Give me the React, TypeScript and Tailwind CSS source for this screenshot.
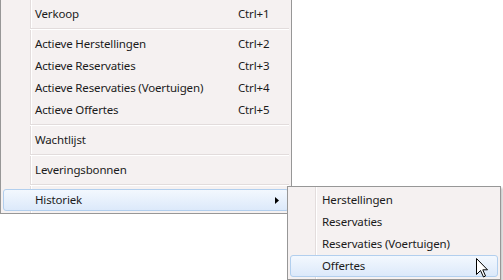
import React from 'react';

type Entry =
  | { kind: 'item'; label: string; shortcut?: string; active?: boolean; submenu?: boolean }
  | { kind: 'sep' };

const mainItems: Entry[] = [
  { kind: 'item', label: 'Verkoop', shortcut: 'Ctrl+1' },
  { kind: 'sep' },
  { kind: 'item', label: 'Actieve Herstellingen', shortcut: 'Ctrl+2' },
  { kind: 'item', label: 'Actieve Reservaties', shortcut: 'Ctrl+3' },
  { kind: 'item', label: 'Actieve Reservaties (Voertuigen)', shortcut: 'Ctrl+4' },
  { kind: 'item', label: 'Actieve Offertes', shortcut: 'Ctrl+5' },
  { kind: 'sep' },
  { kind: 'item', label: 'Wachtlijst' },
  { kind: 'sep' },
  { kind: 'item', label: 'Leveringsbonnen' },
  { kind: 'sep' },
  { kind: 'item', label: 'Historiek', active: true, submenu: true },
];

const subItems = ['Herstellingen', 'Reservaties', 'Reservaties (Voertuigen)', 'Offertes'];

function Row({ label, shortcut, active, submenu }: { label: string; shortcut?: string; active?: boolean; submenu?: boolean }) {
  return (
    <div
      className={
        'flex items-center h-[22px] ' +
        (active
          ? 'rounded-[3px] border border-[#b2cfee] bg-gradient-to-b from-[#f3f8fe] to-[#dce9fa] pl-[31px]'
          : 'pl-[32px]')
      }
    >
      <span className="flex-1">{label}</span>
      {shortcut && <span className="w-[51px]">{shortcut}</span>}
      {submenu && (
        <svg width="4" height="7" viewBox="0 0 4 7" className="mr-[9px]">
          <path d="M0 0 L4 3.5 L0 7 Z" fill="#000" />
        </svg>
      )}
    </div>
  );
}

function Separator() {
  return (
    <div className="h-[8px] flex flex-col justify-center pl-[27px]">
      <div className="h-px bg-[#e2dcdc]" />
      <div className="h-px bg-white" />
    </div>
  );
}

export default function App() {
  return (
    <div
      className="relative w-[503px] h-[280px] bg-white overflow-hidden text-[11.5px] tracking-[-0.15px] text-[#1b1b1b]"
      style={{ fontFamily: '"Noto Sans", "Open Sans", sans-serif' }}
    >
      <div className="w-[292px] border-x border-b border-[#979797] pt-[3px] pb-[2px] px-[2px] bg-[linear-gradient(to_right,#f5f1f1_29px,#e3dddd_29px,#e3dddd_30px,#ffffff_30px,#ffffff_31px,#f5f1f1_31px)]">
        {mainItems.map((e, i) =>
          e.kind === 'sep' ? (
            <Separator key={i} />
          ) : (
            <Row key={i} label={e.label} shortcut={e.shortcut} active={e.active} submenu={e.submenu} />
          )
        )}
      </div>

      <div className="absolute left-[287px] top-[186px] w-[214px] border border-[#979797] p-[2px] shadow-[2px_2px_2px_rgba(0,0,0,0.2)] bg-[linear-gradient(to_right,#f5f1f1_27px,#e3dddd_27px,#e3dddd_28px,#ffffff_28px,#ffffff_29px,#f5f1f1_29px)]">
        {subItems.map((s, i) => (
          <Row key={i} label={s} active={i === 3} />
        ))}
      </div>

      <svg className="absolute left-[476px] top-[258px]" width="13" height="20" viewBox="0 0 13 20">
        <path
          d="M0.5 0.5 L0.5 16.5 L4.5 12.5 L7.5 19 L9.5 18 L6.8 11.8 L11.5 11.8 Z"
          fill="#fff"
          stroke="#000"
          strokeWidth="1"
          strokeLinejoin="miter"
        />
      </svg>
    </div>
  );
}
